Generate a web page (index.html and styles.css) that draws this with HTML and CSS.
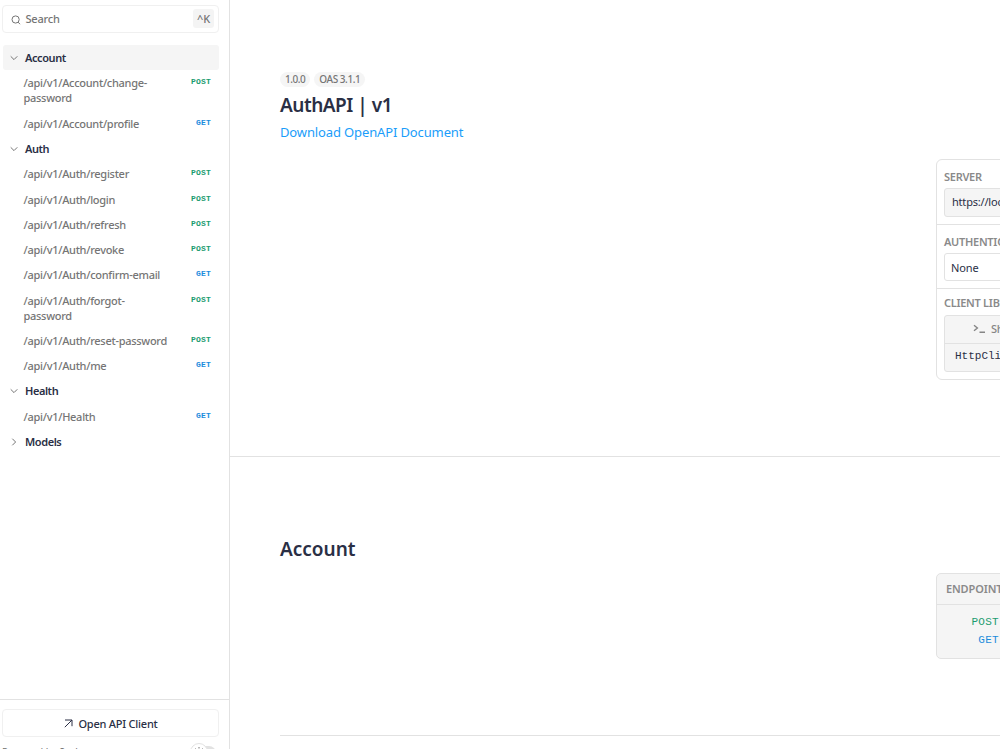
FILE: index.html
```html
<!DOCTYPE html>
<html lang="en">
<head>
<meta charset="utf-8">
<title>AuthAPI | v1</title>
<link rel="stylesheet" href="styles.css">
</head>
<body>
<div class="app">
  <aside class="sidebar">
    <div class="search">
      <svg class="search-icon" viewBox="0 0 10 10"><circle cx="4.6" cy="4.5" r="3.6"/><path d="M7.1 7.1L9 9.2"/></svg>
      <span class="search-label">Search</span><kbd class="key">^K</kbd>
    </div>
    <nav class="nav">
      <div class="group active"><svg class="chev" viewBox="0 0 8 8"><path d="M.7 2.3L4 5.6 7.3 2.3"/></svg><span>Account</span></div>
      <a class="item"><span class="path">/api/v1/Account/change-<br>password</span><b class="post">POST</b></a>
      <a class="item"><span class="path">/api/v1/Account/profile</span><b class="get">GET</b></a>
      <div class="group"><svg class="chev" viewBox="0 0 8 8"><path d="M.7 2.3L4 5.6 7.3 2.3"/></svg><span>Auth</span></div>
      <a class="item"><span class="path">/api/v1/Auth/register</span><b class="post">POST</b></a>
      <a class="item"><span class="path">/api/v1/Auth/login</span><b class="post">POST</b></a>
      <a class="item"><span class="path">/api/v1/Auth/refresh</span><b class="post">POST</b></a>
      <a class="item"><span class="path">/api/v1/Auth/revoke</span><b class="post">POST</b></a>
      <a class="item"><span class="path">/api/v1/Auth/confirm-email</span><b class="get">GET</b></a>
      <a class="item"><span class="path">/api/v1/Auth/forgot-<br>password</span><b class="post">POST</b></a>
      <a class="item"><span class="path">/api/v1/Auth/reset-password</span><b class="post">POST</b></a>
      <a class="item"><span class="path">/api/v1/Auth/me</span><b class="get">GET</b></a>
      <div class="group"><svg class="chev" viewBox="0 0 8 8"><path d="M.7 2.3L4 5.6 7.3 2.3"/></svg><span>Health</span></div>
      <a class="item"><span class="path">/api/v1/Health</span><b class="get">GET</b></a>
      <div class="group"><svg class="chev" viewBox="0 0 8 8"><path d="M2.3 .7L5.6 4 2.3 7.3"/></svg><span>Models</span></div>
    </nav>
    <footer class="foot">
      <a class="client"><svg class="arrow" viewBox="0 0 9 9"><path d="M1 1H8V7.2M8 1L.8 8.2"/></svg><span>Open API Client</span></a>
      <div class="credit"><span>Powered by Scalar</span>
        <span class="toggle"><span class="knob"><svg viewBox="0 0 10 10"><circle cx="5" cy="5" r="2"/><path d="M5 0V1.5M1.5 1.5L2.5 2.5M8.5 1.5L7.5 2.5M0 5H1.5M8.5 5H10"/></svg></span></span>
      </div>
    </footer>
  </aside>
  <main class="main">
    <section class="intro">
      <header>
        <div class="badges"><span class="badge">1.0.0</span><span class="badge">OAS 3.1.1</span></div>
        <h1 class="title">AuthAPI | v1</h1>
        <a class="download">Download OpenAPI Document</a>
      </header>
      <div class="card">
        <div class="block server"><div class="label">SERVER</div><div class="field filled">https://localhost:7001</div></div>
        <div class="block auth"><div class="label">AUTHENTICATION</div><div class="field none">None</div></div>
        <div class="block libs"><div class="label">CLIENT LIBRARIES</div>
          <div class="lib"><div class="tabs"><svg class="shell" viewBox="0 0 13 10"><path d="M1 1.2L4.4 4 1 6.8M6.5 8.3H12"/></svg><span>Shell</span></div><div class="code">HttpClient</div></div>
        </div>
      </div>
    </section>
    <section class="tag">
      <h2 class="subtitle">Account</h2>
      <div class="endpoints"><div class="ep-head">ENDPOINTS</div>
        <div class="ep-list"><div><span class="verb post">POST</span>/api/v1/Account/change-password</div><div><span class="verb get">GET</span>/api/v1/Account/profile</div></div>
      </div>
    </section>
    <div class="rule"></div>
  </main>
</div>
</body>
</html>
```
FILE: styles.css
```css
* { box-sizing: border-box; }
body { margin: 0; height: 749px; overflow: hidden; background: #fff; color: #2a2f45; font-family: "Noto Sans", sans-serif; font-size: 11px; }
svg { fill: none; stroke: currentColor; flex: none; }
.app { display: flex; width: 1000px; height: 749px; overflow: hidden; }
.sidebar { flex: none; width: 230px; height: 749px; border-right: 1px solid #e2e2e2; display: flex; flex-direction: column; overflow: hidden; }
.search { flex: none; margin: 5px 10px 12px 2px; height: 28px; border: 1px solid #f0f0f0; border-radius: 4px; display: flex; align-items: center; padding: 0 4px 1px 8px; color: #757575; font-weight: 500; }
.search-icon { width: 10px; height: 10px; margin: 2px 4.5px 0 0; }
.search-label { flex: 1; letter-spacing: -.2px; }
.key { font-family: inherit; font-size: 11px; background: #f4f4f4; border-radius: 3px; width: 21px; height: 19px; line-height: 19px; text-align: center; }
.nav { flex: 1; padding: 0 10px 0 3px; }
.group { display: flex; align-items: center; height: 25.29px; padding: 0 0 1px 7px; font-weight: 600; border-radius: 3px; letter-spacing: -.42px; }
.active { background: #f5f5f5; }
.chev { width: 8px; height: 8px; margin: 1px 7px 0 0; color: #757575; }
.item { display: flex; justify-content: space-between; padding: 4.9px 8px 5.19px 20.5px; line-height: 15.2px; color: #757575; font-weight: 500; }
.path { letter-spacing: -.28px; }
.item b { font: 700 8px/13px "Liberation Mono", monospace; letter-spacing: .2px; }
.post { color: #1b9c70; }
.get { color: #1c8cdc; }
.foot { flex: none; height: 50px; border-top: 1px solid #e2e2e2; padding: 9px 10px 0 2px; }
.client { display: flex; align-items: center; justify-content: center; height: 28px; border: 1px solid #f0f0f0; border-radius: 4px; padding-left: 1px; font-weight: 500; letter-spacing: -.22px; }
.arrow { width: 9px; height: 9px; margin-right: 5px; }
.credit { display: flex; justify-content: space-between; padding: 6px 3px 0 0; line-height: 18px; color: #757575; font-size: 10px; }
.toggle { width: 26px; height: 14px; margin-top: 3px; border-radius: 7px; background: #e2e2e2; }
.knob { display: flex; align-items: center; justify-content: center; width: 18px; height: 18px; margin-top: -3px; border: 1px solid #e2e2e2; border-radius: 50%; background: #fff; }
.knob svg { width: 10px; height: 10px; }
.main { flex: 1; min-width: 0; overflow: hidden; }
.intro { height: 457px; border-bottom: 1px solid #e2e2e2; padding: 72px 0 0 50px; }
.badges { display: flex; gap: 4px; }
.badge { height: 15px; line-height: 14px; padding: 0 5px; border-radius: 8px; background: #f5f5f5; color: #757575; font-size: 10px; font-weight: 500; letter-spacing: -.45px; }
.title { margin: 4px 0 0; height: 28px; font-size: 19px; line-height: 28px; font-weight: 600; letter-spacing: -.48px; }
.download { display: block; margin-top: 3px; height: 20px; line-height: 20px; font-size: 13px; color: #1a9dfa; letter-spacing: -.13px; }
.card { width: 440px; height: 221px; margin: 17px 0 0 656px; border: 1px solid #e2e2e2; border-radius: 6px; }
.block { padding: 0 7px; border-bottom: 1px solid #e2e2e2; }
.label { color: #8a8a8a; font-weight: 600; line-height: 15px; white-space: nowrap; letter-spacing: -.28px; }
.server { height: 65px; padding-top: 9px; }
.auth { height: 64px; padding-top: 9px; }
.libs { padding-top: 6px; border: 0; }
.field { height: 28px; margin-top: 4px; border: 1px solid #e2e2e2; border-radius: 3px; padding-left: 7px; line-height: 27px; letter-spacing: -.2px; }
.server .field { height: 29px; line-height: 26px; }
.filled { background: #f5f5f5; }
.field.none { padding-left: 6px; letter-spacing: -.1px; line-height: 28px; }
.lib { height: 57px; margin-top: 5px; border: 1px solid #e2e2e2; border-radius: 3px; background: #f5f5f5; }
.tabs { display: flex; align-items: center; height: 28px; padding: 0 0 2px 28px; border-bottom: 1px solid #e2e2e2; color: #858585; font-weight: 500; letter-spacing: -.2px; }
.shell { width: 13px; height: 10px; margin-right: 5px; stroke-width: 1.4; }
.code { padding-left: 10px; line-height: 25px; font-family: "Liberation Mono", monospace; }
.tag { height: 278px; padding: 78px 0 0 50px; }
.subtitle { margin: 0; height: 28px; font-size: 19px; line-height: 28px; font-weight: 600; }
.endpoints { width: 440px; height: 86px; margin: 10px 0 0 656px; border: 1px solid #e2e2e2; border-radius: 5px; background: #f5f5f5; }
.ep-head { height: 31px; line-height: 30px; padding-left: 9px; border-bottom: 1px solid #e2e2e2; font-weight: 600; color: #8a8a8a; letter-spacing: -.12px; }
.ep-list { padding: 8px 0 0 9px; font: 11px/18px "Liberation Mono", monospace; white-space: nowrap; }
.verb { display: inline-block; width: 53px; margin-right: 12px; text-align: right; letter-spacing: .3px; }
.rule { margin-left: 50px; border-top: 1px solid #e2e2e2; }
```
